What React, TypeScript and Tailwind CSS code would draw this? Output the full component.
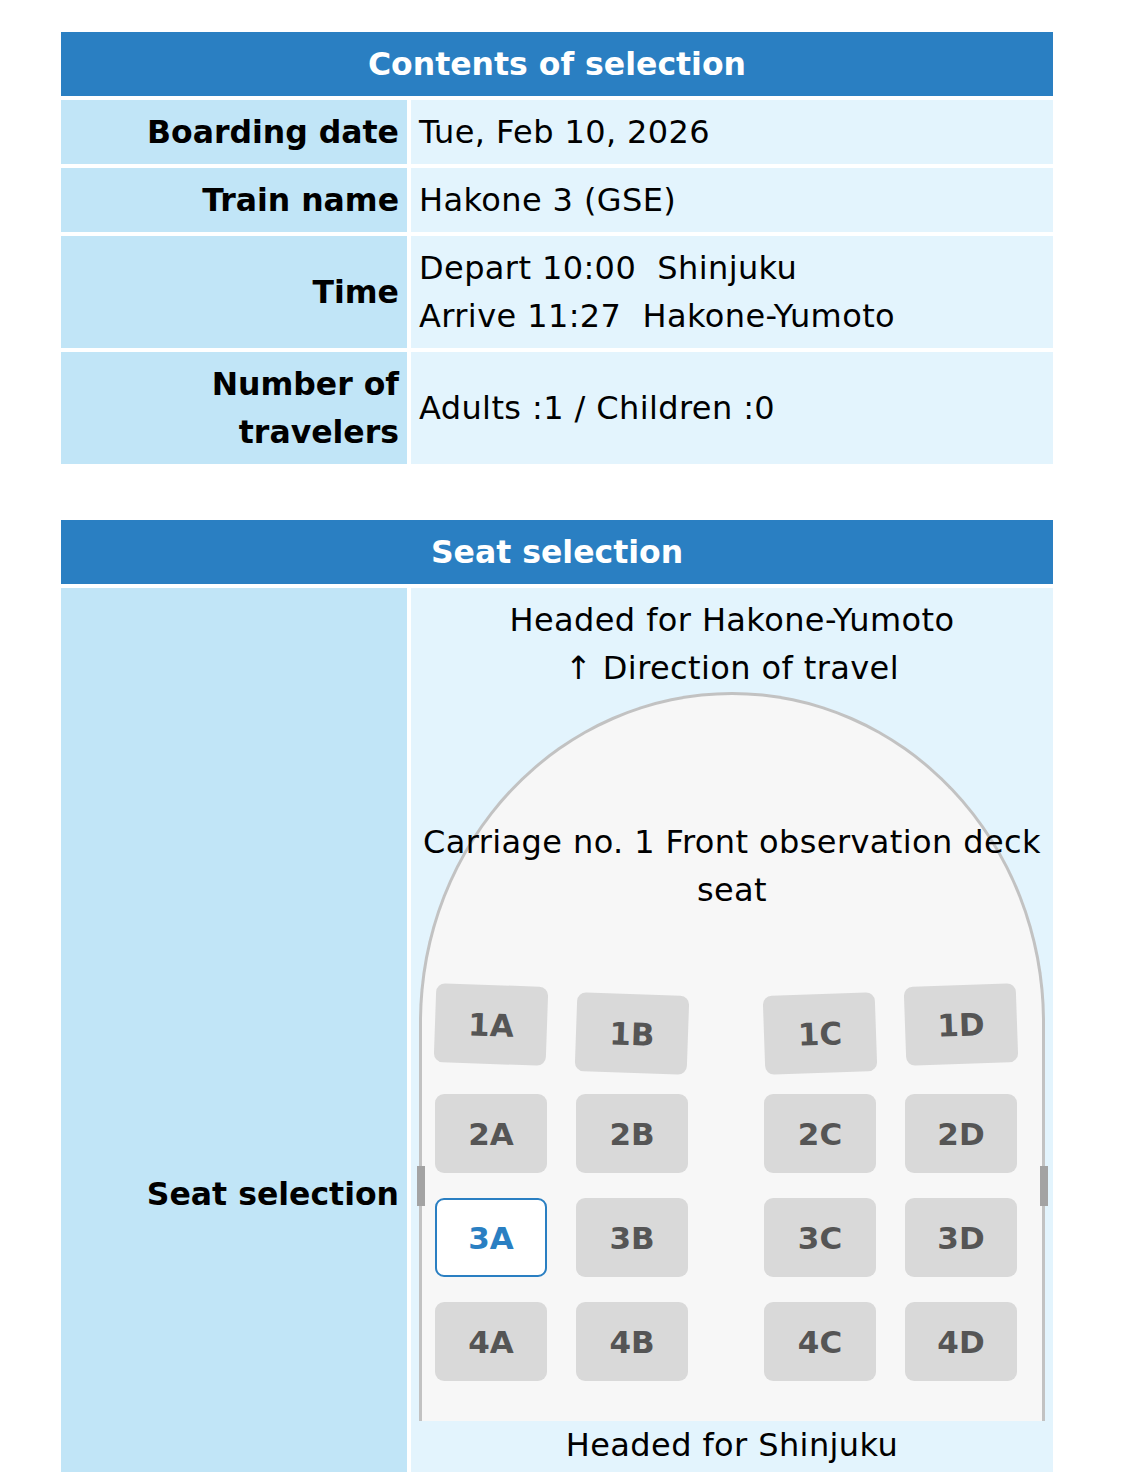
import React from 'react';

type Seat = { id: string; cls: string; selected?: boolean };

const seatRows: Seat[][] = [
  [
    { id: '1A', cls: '-translate-y-[5px] rotate-2' },
    { id: '1B', cls: 'translate-y-[4px] rotate-2' },
    { id: '1C', cls: 'translate-y-[4px] -rotate-2' },
    { id: '1D', cls: '-translate-y-[5px] -rotate-2' },
  ],
  [
    { id: '2A', cls: '' },
    { id: '2B', cls: '' },
    { id: '2C', cls: '' },
    { id: '2D', cls: '' },
  ],
  [
    { id: '3A', cls: '', selected: true },
    { id: '3B', cls: '' },
    { id: '3C', cls: '' },
    { id: '3D', cls: '' },
  ],
  [
    { id: '4A', cls: '' },
    { id: '4B', cls: '' },
    { id: '4C', cls: '' },
    { id: '4D', cls: '' },
  ],
];

function SeatBox({ seat }: { seat: Seat }) {
  return (
    <div
      className={
        'flex h-[79px] w-[112px] items-center justify-center rounded-[9px] text-[31px] font-bold tracking-normal ' +
        (seat.selected
          ? 'border-2 border-[#2a7fc2] bg-white text-[#2a7fc2] '
          : 'bg-[#d9d9d9] text-[#555555] ') +
        seat.cls
      }
    >
      {seat.id}
    </div>
  );
}

function Label({ children }: { children: React.ReactNode }) {
  return (
    <div className="flex items-center justify-end bg-[#c1e5f7] px-2 py-2 text-right text-[31.5px] font-bold tracking-normal">
      {children}
    </div>
  );
}

function Value({ children }: { children: React.ReactNode }) {
  return <div className="flex items-center bg-[#e3f4fd] px-2 py-2">{children}</div>;
}

export default function App() {
  return (
    <div className="min-h-screen bg-white pt-8 font-['DejaVu_Sans',Verdana,sans-serif] text-[32px] leading-[48px] tracking-[0.4px] text-black">
      <div className="ml-[61px] w-[992px]">
        {/* Contents of selection */}
        <div className="flex h-16 items-center justify-center bg-[#2a7fc2] text-[31.5px] font-bold tracking-normal text-white">
          Contents of selection
        </div>
        <div className="mt-1 grid grid-cols-[346px_642px] gap-1">
          <Label>Boarding date</Label>
          <Value>Tue, Feb 10, 2026</Value>

          <Label>Train name</Label>
          <Value>Hakone 3 (GSE)</Value>

          <Label>Time</Label>
          <Value>
            <div>
              <div className="whitespace-pre">Depart 10:00  Shinjuku</div>
              <div className="whitespace-pre">Arrive 11:27  Hakone-Yumoto</div>
            </div>
          </Value>

          <Label>
            <div>
              Number of
              <br />
              travelers
            </div>
          </Label>
          <Value>Adults :1 / Children :0</Value>
        </div>

        {/* Seat selection */}
        <div className="mt-14 flex h-16 items-center justify-center bg-[#2a7fc2] text-[31.5px] font-bold tracking-normal text-white">
          Seat selection
        </div>
        <div className="mt-1 grid min-h-[1212px] grid-cols-[346px_642px] gap-1">
          <Label>Seat selection</Label>
          <div className="flex flex-col items-stretch self-stretch bg-[#e3f4fd] px-2 pt-2 text-center">
            <div>Headed for Hakone-Yumoto</div>
            <div>↑ Direction of travel</div>

            <div className="relative rounded-t-[50%_330px] border-[3px] border-b-0 border-[#c2c2c2] bg-[#f7f7f7] pt-[123px] pb-[40px]">
              <div className="absolute top-[471px] -left-[5px] h-10 w-2 bg-[#a3a3a3]" />
              <div className="absolute top-[471px] -right-[6px] h-10 w-2 bg-[#a3a3a3]" />

              <div className="-mx-[6px]">
                Carriage no. 1 Front observation deck seat
              </div>

              <div className="mt-[76px] flex flex-col gap-[25px] pl-[13px]">
                {seatRows.map((row, i) => (
                  <div key={i} className="flex">
                    <SeatBox seat={row[0]} />
                    <div className="ml-[29px]">
                      <SeatBox seat={row[1]} />
                    </div>
                    <div className="ml-[76px]">
                      <SeatBox seat={row[2]} />
                    </div>
                    <div className="ml-[29px]">
                      <SeatBox seat={row[3]} />
                    </div>
                  </div>
                ))}
              </div>
            </div>

            <div>Headed for Shinjuku</div>
          </div>
        </div>
      </div>
    </div>
  );
}
